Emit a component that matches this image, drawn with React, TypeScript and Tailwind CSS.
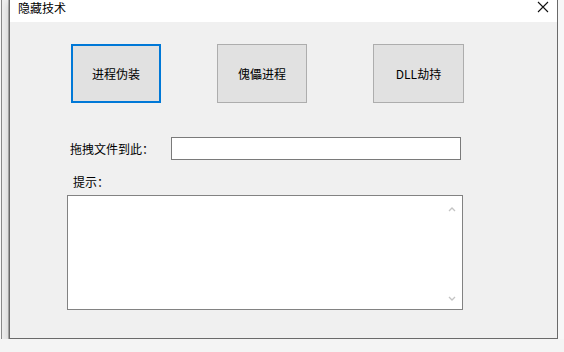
import React from "react";

const font = { fontFamily: '"Noto Sans CJK SC", "Noto Sans", sans-serif' };

export default function App() {
  return (
    <div className="w-[564px] h-[352px] bg-[#fafafa] overflow-hidden flex flex-col" style={font}>
      <div className="flex h-[339px]">
        {/* background window strip */}
        <div className="w-[9px] h-full bg-[#f0f0f0] flex">
          <div className="w-[1px] h-full bg-[#f8f8f8]" />
          <div className="w-[1px] h-full bg-[#8a8a8a]" />
          <div className="flex-1 h-full bg-[#eeeeee]" />
          <div className="w-[1px] h-full bg-[#b0b0b0]" />
        </div>
        {/* main window */}
        <div className="w-[549px] h-full border-l border-r border-b border-[#6a6a6a] flex flex-col bg-[#f0f0f0] shadow-[0_3px_8px_rgba(0,0,0,0.18)]">
          <div className="h-[22px] bg-white flex items-center justify-between pl-[8px] pr-[8px]">
            <span className="text-[12px] leading-[16px] text-black -mt-[6px]">隐藏技术</span>
            <svg width="12" height="12" viewBox="0 0 12 12" className="-mt-[8px]">
              <path d="M1 1 L11 11 M11 1 L1 11" stroke="#111" strokeWidth="1.1" />
            </svg>
          </div>
          <div className="flex-1 flex flex-col">
            {/* buttons */}
            <div className="flex mt-[22px] ml-[61px]">
              <div className="w-[90px] h-[59px] border-2 border-[#0078d7] bg-[#e1e1e1] flex items-center justify-center text-[12px] text-black">
                进程伪装
              </div>
              <div className="ml-[56px] w-[90px] h-[59px] border border-[#adadad] bg-[#e1e1e1] flex items-center justify-center text-[12px] text-black">
                傀儡进程
              </div>
              <div className="ml-[66px] w-[91px] h-[59px] border border-[#adadad] bg-[#e1e1e1] flex items-center justify-center text-[12px] text-black">
                DLL劫持
              </div>
            </div>
            {/* drag row */}
            <div className="flex items-center mt-[34px]">
              <span className="ml-[60px] text-[12px] leading-[16px] text-black">拖拽文件到此：</span>
              <div className="ml-[17px] w-[290px] h-[23px] border border-[#7a7a7a] bg-white" />
            </div>
            <div className="ml-[63px] mt-[14px] text-[12px] leading-[16px] text-black">提示：</div>
            <div className="relative ml-[57px] mt-[5px] w-[396px] h-[115px] border border-[#828282] bg-white">
              <svg width="8" height="6" viewBox="0 0 8 6" className="absolute right-[6px] top-[10px]">
                <path d="M1 5 L4 2 L7 5" stroke="#c4c4c4" strokeWidth="1.3" fill="none" />
              </svg>
              <svg width="8" height="6" viewBox="0 0 8 6" className="absolute right-[6px] bottom-[7px]">
                <path d="M1 1 L4 4 L7 1" stroke="#c4c4c4" strokeWidth="1.3" fill="none" />
              </svg>
            </div>
          </div>
        </div>
        <div className="flex-1 h-full bg-[#f7f7f7]" />
      </div>
      <div className="flex-1 bg-[#f4f4f4]" />
    </div>
  );
}
